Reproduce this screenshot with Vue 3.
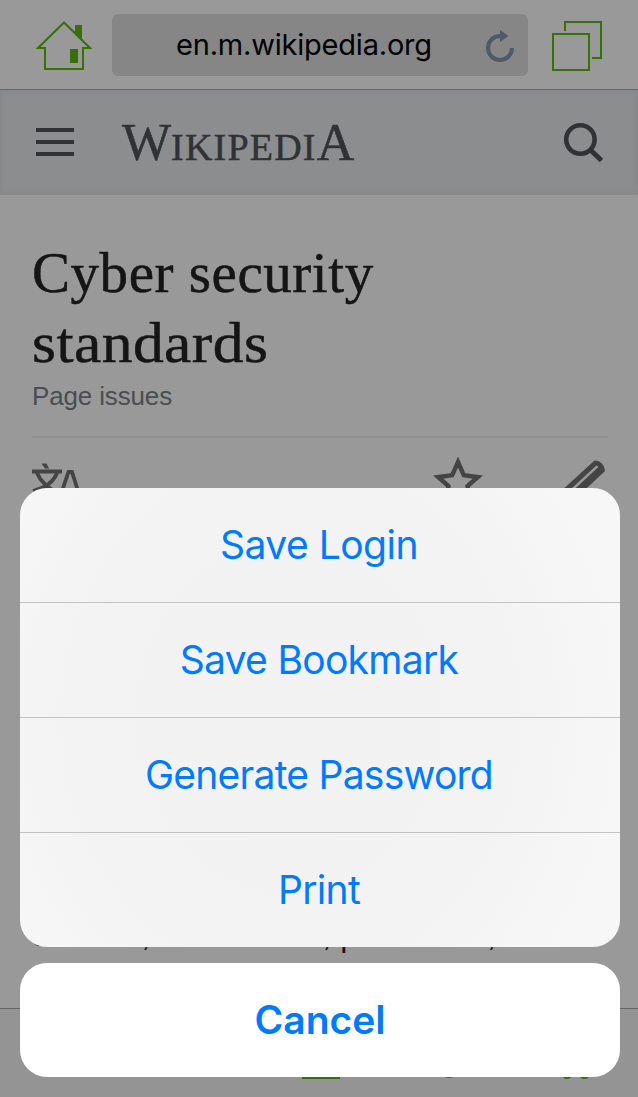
<script setup>
const actions = [
  { label: 'Save Login', cls: 'login' },
  { label: 'Save Bookmark', cls: 'bookmark' },
  { label: 'Generate Password', cls: 'generate' },
  { label: 'Print', cls: 'print' },
]
</script>

<template>
  <div class="screen">
    <header class="toolbar">
      <svg class="home" width="56" height="50" viewBox="0 0 56 50">
        <path d="M28 1.5 2 27H9V48H47V27H54Z" fill="none" stroke="#367009" stroke-width="2" />
        <path d="M39 4h7v14l-7-6.5zM34 28h8v14h-8z" fill="#367009" />
      </svg>
      <div class="address">
        <span class="url">en.m.wikipedia.org</span>
        <svg class="reload" width="30" height="34" viewBox="0 0 30 34">
          <path d="M15 7A12 12 0 1 0 27 19" fill="none" stroke="#4e5a67" stroke-width="4" />
          <path d="M15 1v12l8.5-6z" fill="#4e5a67" />
        </svg>
      </div>
      <svg class="tabs" width="50" height="50" viewBox="0 0 50 50" fill="none" stroke="#367009" stroke-width="2">
        <path d="M13 10V1H49V37H40M1 13H37V49H1Z" />
      </svg>
    </header>

    <div class="site-header">
      <div class="menu"><i /><i /><i /></div>
      <div class="wordmark"><span class="big w">W</span><span class="mid">IKIPEDI</span><span class="big a">A</span></div>
      <svg class="search" width="42" height="42" viewBox="0 0 42 42" fill="none" stroke="#2f3336">
        <circle cx="17.4" cy="17.5" r="14.2" stroke-width="4.6" />
        <path d="M27 27.5 38.5 38.5" stroke-width="5" />
      </svg>
    </div>

    <main class="article">
      <h1><span class="line1">Cyber security</span><br /><span class="line2">standards</span></h1>
      <p class="issues">Page issues</p>
      <div class="rule" />
      <div class="tools">
        <svg class="language" width="48" height="48" viewBox="0 0 48 48" fill="none" stroke="#444" stroke-width="3.8">
          <path d="M0 9.5H30M5 11Q10 23 27 32M25 11Q20 24 1 29M29 32 36.5 10H40L47 32" />
          <path d="M9.5 1.5h5l2.5 5h-4z" fill="#444" stroke="none" />
        </svg>
        <svg class="star" width="50" height="50" viewBox="0 0 50 50">
          <path d="M25 5 30.8 18.3 44.8 20 34.5 29 37 43 25 36 13 43 15.5 29 5.2 20 19.2 18.3Z" fill="none" stroke="#444" stroke-width="4.4" />
        </svg>
        <svg class="pencil" width="50" height="50" viewBox="0 0 50 50">
          <path d="M-4 36 32 3Q34 1.5 38 4T43 13L10 44Z" fill="#444" />
          <path d="M6 35.5 35.5 8.2" stroke="#999" stroke-width="2.5" />
        </svg>
      </div>
      <p class="excerpt">devices, all software, processes,</p>
    </main>

    <footer class="bottom-bar">
      <svg width="638" height="88" viewBox="0 0 638 88" fill="#367009">
        <path d="M302 60h38v10h-38zM438 60h22q-4 9-11 9t-11-9z" />
        <circle cx="567" cy="64.5" r="5.5" /><circle cx="584.5" cy="64.5" r="5.5" />
      </svg>
    </footer>

    <div class="sheet">
      <div class="actions">
        <button v-for="action in actions" :key="action.label" :class="action.cls"><span>{{ action.label }}</span></button>
      </div>
      <button class="cancel"><span>Cancel</span></button>
    </div>
  </div>
</template>

<style>
body { margin: 0; background: #999; }
</style>

<style scoped>
* { box-sizing: border-box; }
.screen { position: relative; width: 638px; height: 1097px; overflow: hidden; background: #999; display: flex; flex-direction: column; font-family: Inter, "Liberation Sans", sans-serif; }
.toolbar { height: 90px; flex: none; border-bottom: 1px solid #666; padding: 14px 36px; display: flex; align-items: flex-start; }
svg { display: block; flex: none; }
.home { margin-top: 7px; }
.address { width: 416px; height: 62px; margin-left: 20px; background: #868686; border-radius: 6px; display: flex; align-items: center; }
.url { margin-left: 64px; width: 256px; white-space: nowrap; font-size: 29px; letter-spacing: -0.2px; line-height: 62px; color: #000; }
.reload { margin: 2px 0 0 53px; }
.tabs { margin: 7px 0 0 24px; }
.site-header { height: 105px; flex: none; background: #8c8d8f; border-bottom: 1px solid #87888a; box-shadow: inset 0 0 6px rgba(70, 70, 75, .12); display: flex; align-items: flex-start; padding: 31px 33px 0 36px; }
.menu { width: 38px; padding-top: 7px; display: grid; gap: 8px; }
.menu i { height: 4px; background: #2f3336; }
.wordmark { height: 50px; margin-left: 48px; margin-top: -1px; width: 240px; white-space: nowrap; color: #2f3336; font-family: "Liberation Serif", serif; display: flex; align-items: baseline; line-height: 45px; -webkit-text-stroke: .5px #2f3336; }
.big { font-size: 52px; }
.a { margin-left: 0; }
.mid { font-size: 38px; letter-spacing: 1.2px; }
.search { margin: 1px 0 0 auto; }
.article { padding: 43px 30px 0 32px; height: 813px; flex: none; display: flex; flex-direction: column; }
h1 { margin: 0; font: 400 57px/70px "Liberation Serif", serif; color: #151515; white-space: nowrap; -webkit-text-stroke: .5px #151515; }
.line1 { letter-spacing: .55px; }
.line2 { display: inline-block; letter-spacing: .4px; transform: scaleX(1.08); transform-origin: left; }
.issues { margin: 0; padding-top: 3px; font: 26px/30px "Liberation Sans", sans-serif; letter-spacing: -.15px; color: #4a4d51; }
.rule { height: 2px; flex: none; margin-top: 25px; background: #8f8f8f; width: 576px; }
.tools { display: flex; height: 60px; margin-top: 25px; }
.language { margin-left: 0; margin-top: -1px; }
.star { margin: -6px 0 0 353px; }
.pencil { margin: -5px 0 0 79px; }
.excerpt { margin: auto 0 55px; font: 32px/36px "Liberation Sans", sans-serif; letter-spacing: .1px; color: #151515; white-space: nowrap; }
.bottom-bar { height: 89px; flex: none; border-top: 1px solid #666; background: #949494; }
.sheet { position: absolute; left: 20px; top: 488px; width: 600px; display: grid; gap: 16px; }
.actions { border-radius: 27px; overflow: hidden; background: radial-gradient(ellipse 340px 390px at 45% 50%, #f2f2f2 0%, #f3f3f3 65%, #f7f7f7 100%); }
button { display: block; width: 100%; height: 115px; border: 0; margin: 0; padding: 0 2px 2px 0; background: none; color: #007aff; font: 400 39px/113px Inter, sans-serif; }
.actions button + button { border-top: 1px solid #c3c3c7; }
.actions button:first-child { height: 114px; }
.login { letter-spacing: -.5px; }
.bookmark { letter-spacing: -.7px; }
.generate { letter-spacing: -.75px; }
.print { letter-spacing: -.7px; }
.cancel { height: 114px; border-radius: 27px; background: #fff; font-weight: 600; padding-right: 0; }
</style>
